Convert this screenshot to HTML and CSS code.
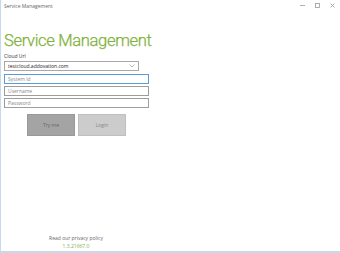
FILE: index.html
```html
<!DOCTYPE html>
<html lang="en">
<head>
    <meta charset="UTF-8">
    <meta name="viewport" content="width=device-width, initial-scale=1.0">
    <title>Service Management</title>
    <link rel="stylesheet" href="styles.css">
</head>
<body>
    <div class="window">
        <div class="titlebar">
            <span class="title">Service Management</span>
            <div class="controls">
                <span class="ctrl">
                    <svg width="5" height="5" viewBox="0 0 5 5"><path d="M0 2.5 L5 2.5" stroke="#999" stroke-width="0.8"/></svg>
                </span>
                <span class="ctrl">
                    <svg width="5" height="5" viewBox="0 0 5 5"><rect x="0.5" y="0.5" width="4" height="4" fill="none" stroke="#999" stroke-width="0.8"/></svg>
                </span>
                <span class="ctrl">
                    <svg width="5" height="5" viewBox="0 0 5 5"><path d="M0.5 0.5 L4.5 4.5 M4.5 0.5 L0.5 4.5" stroke="#999" stroke-width="0.8"/></svg>
                </span>
            </div>
        </div>

        <div class="content">
            <h1>Service Management</h1>
            <label class="field-label">Cloud Url</label>
            <div class="select">
                <span>testcloud.addovation.com</span>
                <svg width="6" height="4" viewBox="0 0 6 4"><path d="M0.5 0.5 L3 3 L5.5 0.5" fill="none" stroke="#999" stroke-width="0.7"/></svg>
            </div>
            <input class="input focused" type="text" placeholder="System Id">
            <input class="input" type="text" placeholder="Username">
            <input class="input" type="password" placeholder="Password">

            <div class="buttons">
                <button class="btn try">Try me</button>
                <button class="btn login">Login</button>
            </div>
        </div>

        <div class="footer">
            <div class="privacy">Read our privacy policy</div>
            <div class="version">1.3.21667.0</div>
        </div>
    </div>
</body>
</html>
```

FILE: styles.css
```css
* { box-sizing: border-box; }
body {
    margin: 0;
    font-family: 'Open Sans', 'Noto Sans', sans-serif;
    background: #fff;
}
.window {
    width: 340px;
    height: 253px;
    border-left: 1px solid #c5d9ef;
    border-bottom: 2px solid #c5d9ef;
    display: flex;
    flex-direction: column;
}
.titlebar {
    height: 11px;
    display: flex;
    align-items: center;
    justify-content: space-between;
    padding-left: 3px;
}
.title {
    font-size: 5px;
    color: #666;
}
.controls {
    display: flex;
    align-items: center;
}
.ctrl {
    width: 15px;
    display: flex;
    justify-content: center;
    align-items: center;
}
.content {
    padding: 19px 0 0 3px;
    flex: 1;
}
h1 {
    margin: 0;
    font-family: Roboto, 'Open Sans', sans-serif;
    font-size: 16.6px;
    font-weight: 300;
    color: #80b13a;
    line-height: 22px;
    letter-spacing: -0.35px;
    -webkit-text-stroke: 0.25px #80b13a;
}
.field-label {
    display: block;
    font-size: 5px;
    color: #333;
    margin-top: 1px;
    height: 8px;
}
.select {
    width: 135px;
    height: 10px;
    border: 1px solid #a8a8a8;
    display: flex;
    align-items: center;
    justify-content: space-between;
    padding: 0 3px;
    font-size: 5px;
    color: #222;
}
.input {
    display: block;
    width: 145px;
    height: 10px;
    border: 1px solid #9d9d9d;
    margin: 3px 0 0 0;
    padding: 0 3px;
    font-family: inherit;
    font-size: 5px;
    outline: none;
}
.input + .input { margin-top: 2px; }
.input::placeholder { color: #888; }
.input.focused { border-color: #5b9bd8; }
.buttons {
    display: flex;
    gap: 3px;
    margin: 6px 0 0 23px;
}
.btn {
    width: 48px;
    height: 22px;
    border: 1px solid #bfbfbf;
    font-family: inherit;
    font-size: 5px;
    color: #888;
    padding: 0;
}
.btn.try { background: #a4a4a4; border-color: #999; color: #666; }
.btn.login { background: #cccccc; }
.footer {
    width: 150px;
    text-align: center;
    padding-bottom: 1px;
    font-size: 5px;
    line-height: 8px;
}
.privacy { color: #666; }
.version { color: #80b13a; }
```
